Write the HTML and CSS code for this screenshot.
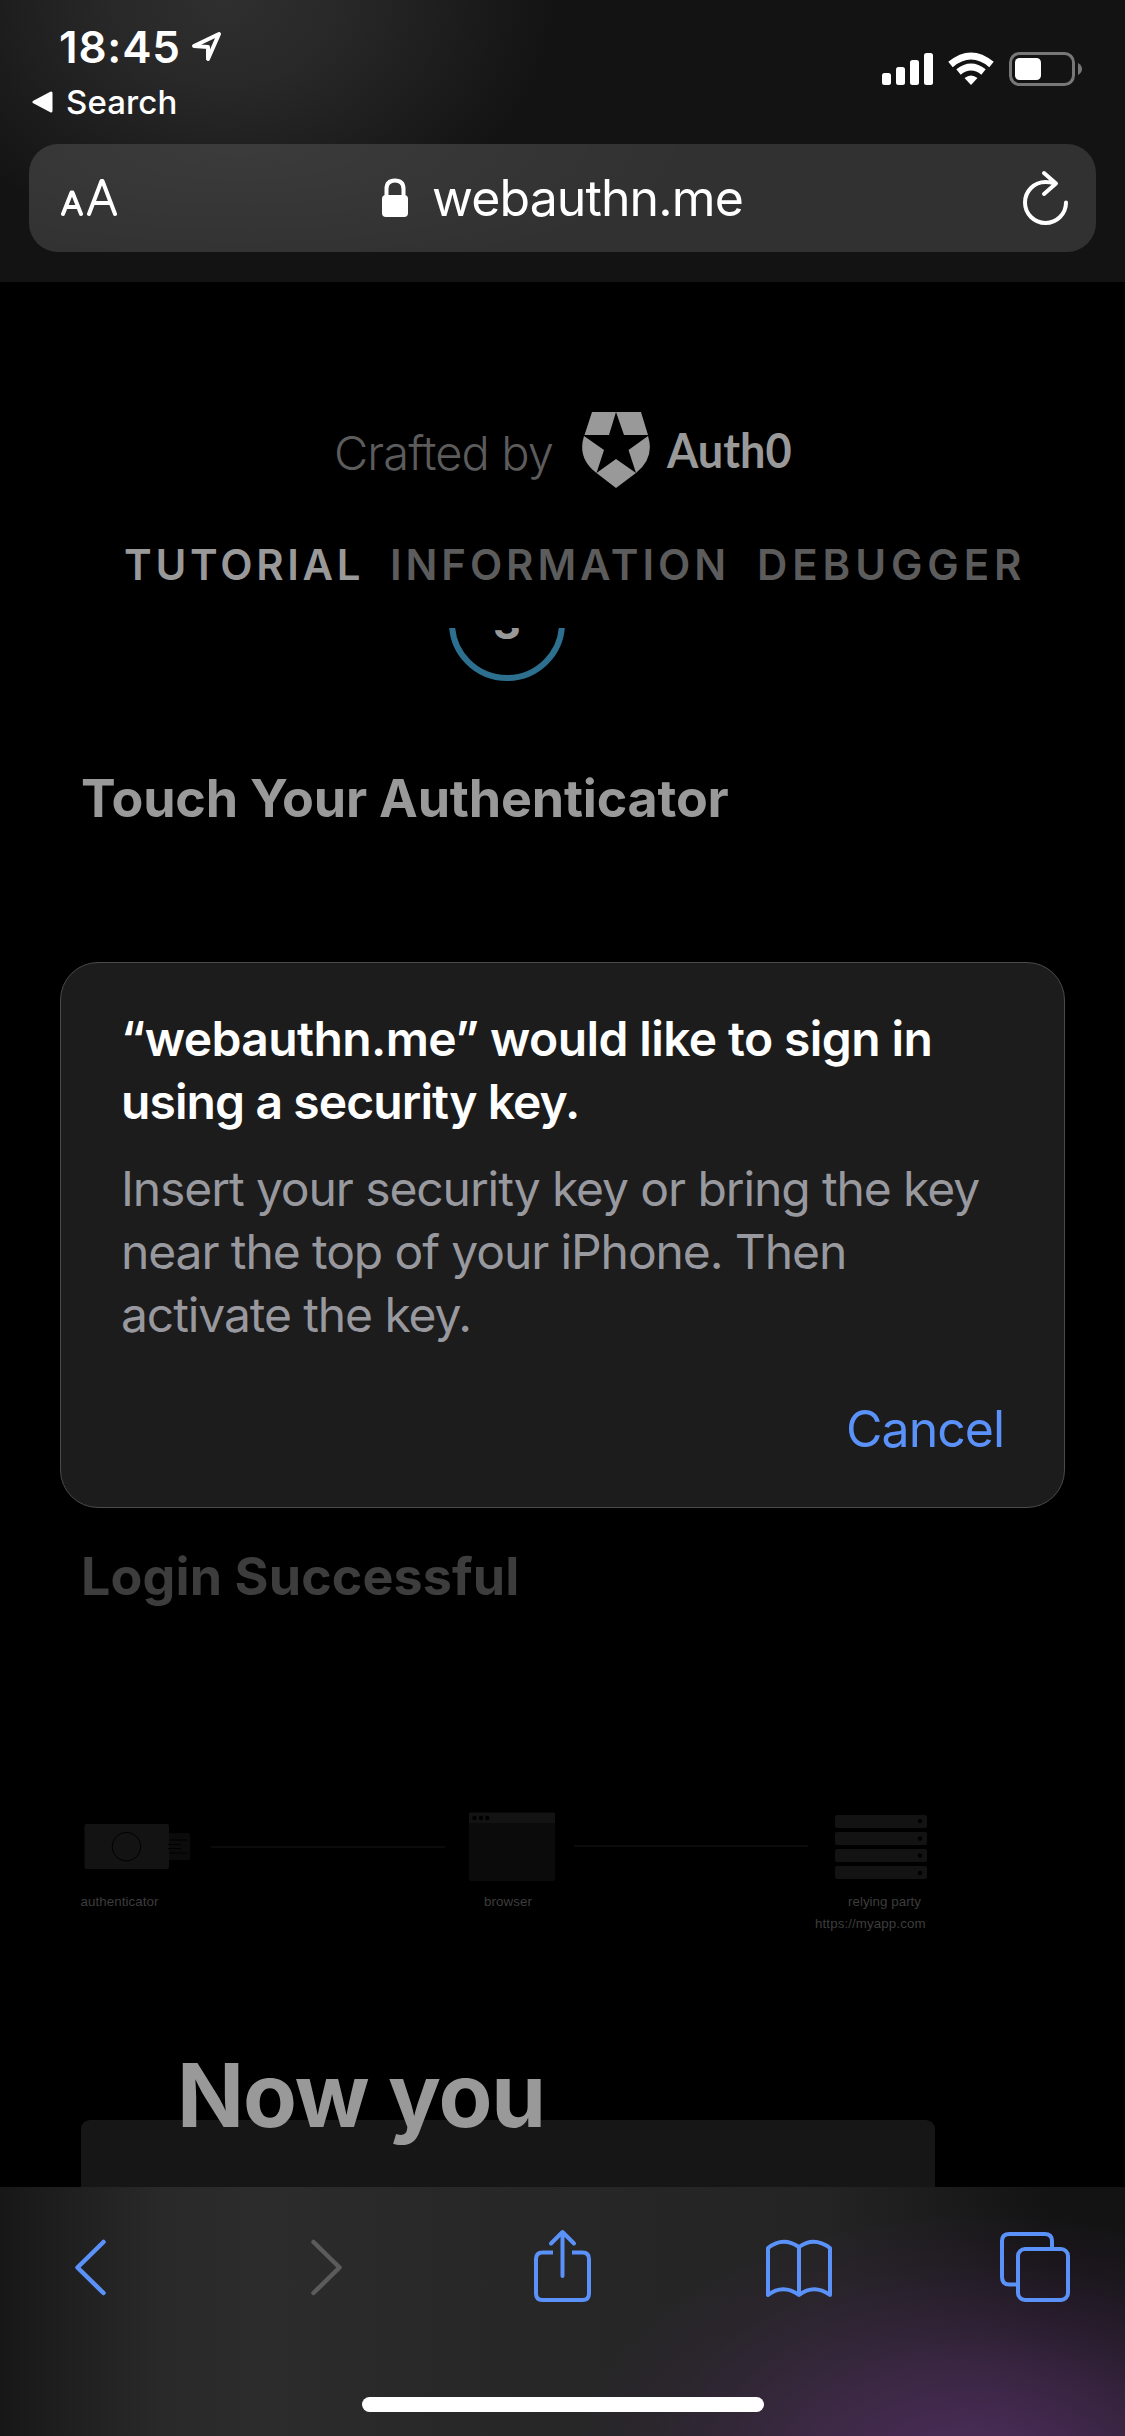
FILE: index.html
```html
<!DOCTYPE html>
<html lang="en">
<head>
<meta charset="utf-8">
<title>webauthn.me</title>
<link rel="stylesheet" href="styles.css">
</head>
<body>
<header class="chrome">
  <div class="status">
    <div class="status-left">
      <div class="time"><span class="clock">18:45</span>
        <svg class="location" width="32" height="32" viewBox="0 0 32 32"><path d="M3 15 28 3 17 28V16Z" fill="none" stroke="#fff" stroke-width="4" stroke-linejoin="round"/></svg>
      </div>
      <div class="back-app">
        <svg width="22" height="22" viewBox="0 0 22 22"><path d="M2 11 19 2v18Z" fill="#fff" stroke="#fff" stroke-width="3" stroke-linejoin="round"/></svg>
        <span class="search">Search</span>
      </div>
    </div>
    <svg class="indicators" width="204" height="36" viewBox="0 0 204 36">
      <g fill="#fff">
        <rect x="2" y="22" width="9" height="12" rx="2.5"/><rect x="16" y="16" width="9" height="18" rx="2.5"/><rect x="30" y="9" width="9" height="25" rx="2.5"/><rect x="44" y="2" width="9" height="32" rx="2.5"/>
        <path d="M91 34 84.5 27q6.500-5 13 0Z"/>
        <rect x="135" y="7" width="26" height="22" rx="4.500"/>
      </g>
      <g fill="none" stroke="#fff" stroke-width="7">
        <path d="M70.500 13.500q20.500-17 41 0"/><path d="M78.500 21q12.500-10 25 0"/>
      </g>
      <rect x="130.500" y="2.500" width="63" height="31" rx="9" fill="none" stroke="#777" stroke-width="3"/>
      <path d="M198 12q4 2.500 4 6t-4 6Z" fill="#777"/>
    </svg>
  </div>
  <div class="address">
    <svg width="60" height="42" viewBox="0 0 60 42" fill="none" stroke="#fff" stroke-width="4" stroke-linecap="round" stroke-linejoin="round"><path d="M6 37 14.500 15.500h1L24 37M9 30h12M32 37 44.500 4h1L58 37M36 26h18"/></svg>
    <div class="site">
      <svg width="28" height="40" viewBox="0 0 28 40"><path d="M5.500 20v-9q0-8.500 8.500-8.500t8.500 8.500v9" fill="none" stroke="#fff" stroke-width="4"/><rect x="1" y="17" width="26" height="22" rx="4" fill="#fff"/></svg>
      <span class="domain">webauthn.me</span>
    </div>
    <svg width="50" height="58" viewBox="0 0 50 58" fill="none" stroke="#fff" stroke-width="4" stroke-linecap="round" stroke-linejoin="round"><path d="M34.500 14.500Q30 13 25.500 13A20.500 20.500 0 1 0 46 33.500M24 4 36 14.500 24 25"/></svg>
  </div>
</header>

<main class="page">
  <div class="brand">
    <span class="crafted">Crafted by</span>
    <svg width="68" height="76" viewBox="0 0 68 76" fill="#999"><path d="M10 0H34L27 23H2.500ZM34 0H59L66 23H42ZM2 24 22 38 14.500 61Q-5 46 2 24ZM66 24 46.500 38 54 61Q73 46 66 24ZM34 47 54 61 34 76 14.500 61Z"/></svg>
    <span class="auth">Auth0</span>
  </div>
  <nav class="tabs"><span class="tab tab-on t1">TUTORIAL</span><span class="tab t2">INFORMATION</span><span class="tab t3">DEBUGGER</span></nav>
  <section class="tutorial">
    <div class="step-window"><div class="step"><span class="step-number">3</span></div></div>
    <h2 class="heading touch">Touch Your Authenticator</h2>
    <h2 class="heading login">Login Successful</h2>
    <svg class="flow" width="860" height="130" viewBox="80 1805 860 130">
      <g fill="#131313">
        <rect x="84.500" y="1824" width="84.500" height="45" rx="2"/>
        <path d="M469 1823v-9q0-1.500 1.500-1.500h83q1.500 0 1.500 1.500v9Z"/>
        <rect x="835" y="1815" width="92" height="13" rx="2"/><rect x="835" y="1832" width="92" height="13" rx="2"/><rect x="835" y="1849" width="92" height="13" rx="2"/><rect x="835" y="1866" width="92" height="13" rx="2"/>
      </g>
      <g fill="#0b0b0b">
        <path d="M169 1833h19q2 0 2 2v23q0 2-2 2h-19Z"/>
        <path d="M469 1823h86v56q0 2-2 2h-82q-2 0-2-2Z"/>
        <rect x="211" y="1846" width="234" height="2"/><rect x="574" y="1845" width="234" height="2"/>
      </g>
      <g fill="#000"><circle cx="474.500" cy="1818" r="2.200"/><circle cx="481" cy="1818" r="2.200"/><circle cx="487.300" cy="1818" r="2.200"/><circle cx="920" cy="1821" r="2.200"/><circle cx="920" cy="1838.500" r="2.200"/><circle cx="920" cy="1855.500" r="2.200"/><circle cx="920" cy="1873" r="2.200"/></g>
      <circle cx="126.500" cy="1846.700" r="14.300" fill="none" stroke="#000"/>
      <path d="M169 1840h18M168 1844.500h13M168 1848.500h13M169 1853h18" stroke="#000" fill="none"/>
      <g class="flow-labels"><text x="80.500" y="1906" textLength="78">authenticator</text><text x="484" y="1906" textLength="48">browser</text><text x="848" y="1906" textLength="73">relying party</text><text x="815" y="1927.500" textLength="110.500">https://myapp.com</text></g>
    </svg>
    <div class="next-card"><h1 class="now">Now you</h1></div>
  </section>
</main>

<footer class="toolbar">
  <div class="tools">
    <svg width="40" height="76" viewBox="0 0 40 76" fill="none" stroke="#5b92fa" stroke-width="4.500" stroke-linecap="round" stroke-linejoin="round"><path d="M33.500 14 7.500 39.500 33.500 65"/></svg>
    <svg width="40" height="76" viewBox="0 0 40 76" fill="none" stroke="#5b5b5b" stroke-width="4.500" stroke-linecap="round" stroke-linejoin="round"><path d="M7.500 14 33.500 39.500 7.500 65"/></svg>
    <svg width="60" height="76" viewBox="0 0 60 76" fill="none" stroke="#5b92fa" stroke-width="4" stroke-linecap="round" stroke-linejoin="round"><path d="M20 24.500H9.500Q3 24.500 3 31V65.500Q3 72 9.500 72H49.500Q56 72 56 65.500V31Q56 24.500 49.500 24.500H39" stroke-linecap="butt"/><path d="M29.500 48V5M18 15.500 29.500 4 41 15.500"/></svg>
    <svg width="70" height="76" viewBox="0 0 70 76" fill="none" stroke="#5b92fa" stroke-width="4" stroke-linecap="round" stroke-linejoin="round"><path d="M35 67Q19 55.500 4 67V20Q19 8 35 19Q50 8 66 20V67Q50 55.500 35 67ZM35 19V67"/></svg>
    <svg width="72" height="76" viewBox="0 0 72 76" fill="none" stroke="#5b92fa" stroke-width="4"><path d="M18 56.500H10.500Q3 56.500 3 49V13Q3 6 10.500 6H45.500Q53 6 53 13V21"/><rect x="19" y="21" width="50" height="51" rx="7"/></svg>
  </div>
  <div class="home"></div>
</footer>

<section class="dialog">
  <p class="dialog-title"><span class="d1">“webauthn.me” would like to sign in</span><br><span class="d2">using a security key.</span></p>
  <p class="dialog-text">Insert your security key or bring the key<br>near the top of your iPhone. Then<br>activate the key.</p>
  <span class="cancel">Cancel</span>
</section>
</body>
</html>
```
FILE: styles.css
```css
* { box-sizing: border-box; }
body {
  margin: 0;
  width: 1125px;
  height: 2436px;
  display: flex;
  flex-direction: column;
  position: relative;
  overflow: hidden;
  background: #000;
  color: #fff;
  font-family: Inter, "Liberation Sans", sans-serif;
  white-space: nowrap;
}
h1, h2, p { margin: 0; }
svg { display: block; flex: none; }

.chrome {
  height: 282px;
  flex: none;
  padding: 0 29px;
  background: radial-gradient(ellipse 330px 250px at 225px 0, #2f2f2f 0%, #282828 35%, #1b1b1b 75%, #131313 100%), #131313;
}
.status { height: 144px; display: flex; justify-content: space-between; }
.status-left { padding-top: 22px; }
.time { display: flex; align-items: center; gap: 10px; height: 50px; padding-left: 30px; }
.clock { font-size: 44px; font-weight: 600; letter-spacing: 0.8px; }
.back-app { display: flex; align-items: center; gap: 12px; height: 40px; margin-top: 10px; padding-left: 3px; }
.search { font-size: 33px; font-weight: 500; letter-spacing: 0.1px; }
.indicators { margin: 51px 12px 0 0; }
.address {
  height: 108px;
  border-radius: 29px;
  padding: 0 26px 0 28px;
  display: flex;
  align-items: center;
  justify-content: space-between;
  background: radial-gradient(ellipse 460px 130px at 210px 0, rgba(255,255,255,.05), transparent), #313131;
}
.site { display: flex; align-items: center; gap: 23px; margin-right: 13px; }
.domain { font-size: 50px; font-weight: 400; letter-spacing: -0.9px; line-height: 60px; }

.page { height: 1905px; flex: none; overflow: hidden; }
.brand { height: 206px; padding: 130px 0 0 334px; display: flex; }
.crafted { width: 248px; padding-top: 10px; font-size: 47px; font-weight: 300; line-height: 62px; letter-spacing: -0.9px; color: #5c5c5c; }
.auth { padding: 9px 0 0 18px; font: 700 48px/58px Lato, sans-serif; color: #999; transform: scaleX(.94); transform-origin: left; }
.tabs { height: 140px; padding: 57px 0 0 124px; display: flex; }
.tab { font-size: 42px; font-weight: 600; line-height: 40px; color: #5c5c5c; }
.tab-on { color: #999; }
.t1 { width: 266px; letter-spacing: 3.7px; }
.t2 { width: 367px; letter-spacing: 3.9px; }
.t3 { letter-spacing: 4.9px; }
.tutorial { padding-left: 81px; }
.step-window { height: 53px; overflow: hidden; display: flex; align-items: flex-end; padding-left: 368px; }
.step {
  width: 116px;
  height: 116px;
  flex: none;
  border: 6px solid #2d6f8f;
  border-radius: 50%;
  display: flex;
  justify-content: center;
  align-items: center;
}
.step-number { font-size: 43px; font-weight: 700; line-height: 52px; color: #999; }
.heading { font-size: 52px; font-weight: 650; line-height: 60px; color: #999; }
.touch { margin-top: 88px; letter-spacing: -0.2px; }
.login { margin-top: 718px; letter-spacing: 0.1px; color: #3d3d3d; }
.flow { margin: 198px 0 0 -1px; }
.flow-labels { font: 13.300px "Liberation Sans", sans-serif; fill: #3d3d3d; }
.next-card { width: 854px; height: 90px; margin-top: 185px; border-radius: 9px 9px 0 0; background: #161616; padding-left: 96px; }
.now { font-size: 88px; font-weight: 650; line-height: 100px; letter-spacing: -1.1px; color: #999; transform: translateY(-75px); }

.toolbar {
  height: 249px;
  flex: none;
  padding-top: 41px;
  background:
    radial-gradient(ellipse 420px 270px at 980px 290px, rgba(78,46,92,.95) 0%, rgba(76,45,90,.86) 20%, rgba(74,44,87,.68) 40%, rgba(70,42,82,.42) 60%, rgba(66,40,78,.18) 80%, rgba(66,40,78,0) 100%),
    linear-gradient(90deg, #171717 0, #1d1d1d 50px, #292929 160px, #2c2c2c 260px, #282828 440px, #242424 820px, #1d1d1d 920px, #131313 1050px);
}
.tools { display: grid; grid-template-columns: repeat(5, 236.3px); justify-content: center; justify-items: center; }
.home { width: 402px; height: 15px; border-radius: 8px; background: #fff; margin: 93px 0 0 362px; }

.dialog {
  position: absolute;
  left: 60px;
  top: 962px;
  width: 1005px;
  height: 546px;
  padding: 44px 60px;
  border: 1.500px solid #4a4a4c;
  border-radius: 38px;
  background: #1c1c1c;
  display: flex;
  flex-direction: column;
  font-size: 48px;
  line-height: 63px;
}
.dialog-title { font-weight: 600; }
.d1 { letter-spacing: -0.6px; }
.d2 { letter-spacing: -0.9px; }
.dialog-text { margin-top: 24px; letter-spacing: -1.1px; color: #98989f; }
.cancel { margin: 52px 0 0; align-self: flex-end; font-size: 50px; letter-spacing: -1px; color: #5b92fa; }
```
